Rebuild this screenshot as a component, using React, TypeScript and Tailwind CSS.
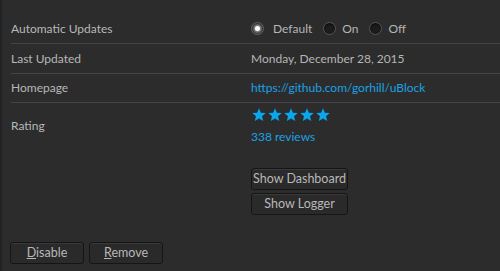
import React from "react";

const font = { fontFamily: 'Lato, "Open Sans", sans-serif' };

function Radio({ checked, label }: { checked?: boolean; label: string }) {
  return (
    <div className={`flex items-center mr-[11px] ${checked ? "gap-[9px]" : "gap-[6px]"}`}>
      <span className="relative w-[13px] h-[13px] rounded-full border border-[#555] bg-[#1c1c1c] flex items-center justify-center shadow-[inset_0_1px_2px_rgba(0,0,0,0.8)]">
        {checked && (
          <span className="w-[5px] h-[5px] rounded-full bg-white shadow-[0_0_3px_2px_rgba(255,255,255,0.55)]" />
        )}
      </span>
      <span className="text-[#b5b5b5]">{label}</span>
    </div>
  );
}

function Star() {
  return (
    <svg width="16" height="14" viewBox="0 0 24 23">
      <path
        d="M12 0.5l3.1 7.3 7.9.6-6 5.2 1.9 7.7L12 17.2l-6.9 4.1 1.9-7.7-6-5.2 7.9-.6z"
        fill="#0aa6ee"
      />
    </svg>
  );
}

function Btn({ children, w }: { children: React.ReactNode; w: string }) {
  return (
    <div
      className={`${w} h-[22px] flex items-center justify-center whitespace-nowrap rounded-[3px] border border-[#151515] bg-[#2a2a2a] shadow-[inset_0_1px_0_rgba(255,255,255,0.07)] text-[#b8b8b8] text-[12.5px]`}
    >
      {children}
    </div>
  );
}

export default function App() {
  return (
    <div
      className="w-[500px] h-[271px] bg-[#2c2c2c] text-[12px] leading-none overflow-hidden border-l-2 border-[#232323] flex flex-col whitespace-nowrap"
      style={font}
    >
      <div className="pl-[9px] pt-[14px]">
        <div className="flex items-center h-[30px] border-b border-[#454545]">
          <div className="w-[240px] text-[#b8b8b8]">Automatic Updates</div>
          <div className="flex items-center">
            <Radio checked label="Default" />
            <Radio label="On" />
            <Radio label="Off" />
          </div>
        </div>
        <div className="flex items-center h-[30px] border-b border-[#454545]">
          <div className="w-[240px] text-[#b8b8b8]">Last Updated</div>
          <div className="text-[#b5b5b5]">Monday, December 28, 2015</div>
        </div>
        <div className="flex items-center h-[29px] border-b border-[#454545]">
          <div className="w-[240px] text-[#b8b8b8]">Homepage</div>
          <div className="text-[#1ba1e2]">https://github.com/gorhill/uBlock</div>
        </div>
        <div className="flex items-center pt-[5px]">
          <div className="w-[240px] text-[#b8b8b8]">Rating</div>
          <div className="flex flex-col">
            <div className="flex items-center h-[14px]">
              <Star />
              <Star />
              <Star />
              <Star />
              <Star />
            </div>
            <div className="text-[#1ba1e2] mt-[9px]">338 reviews</div>
          </div>
        </div>
        <div className="ml-[240px] mt-[25px] flex flex-col gap-[3px]">
          <Btn w="w-[97px]">Show Dashboard</Btn>
          <Btn w="w-[97px]">Show Logger</Btn>
        </div>
      </div>
      <div className="mt-auto mb-[7px] pl-[8px] flex gap-[5px]">
        <Btn w="w-[74px]">
          <span>
            <span className="underline">D</span>isable
          </span>
        </Btn>
        <Btn w="w-[74px]">
          <span>
            <span className="underline">R</span>emove
          </span>
        </Btn>
      </div>
    </div>
  );
}
